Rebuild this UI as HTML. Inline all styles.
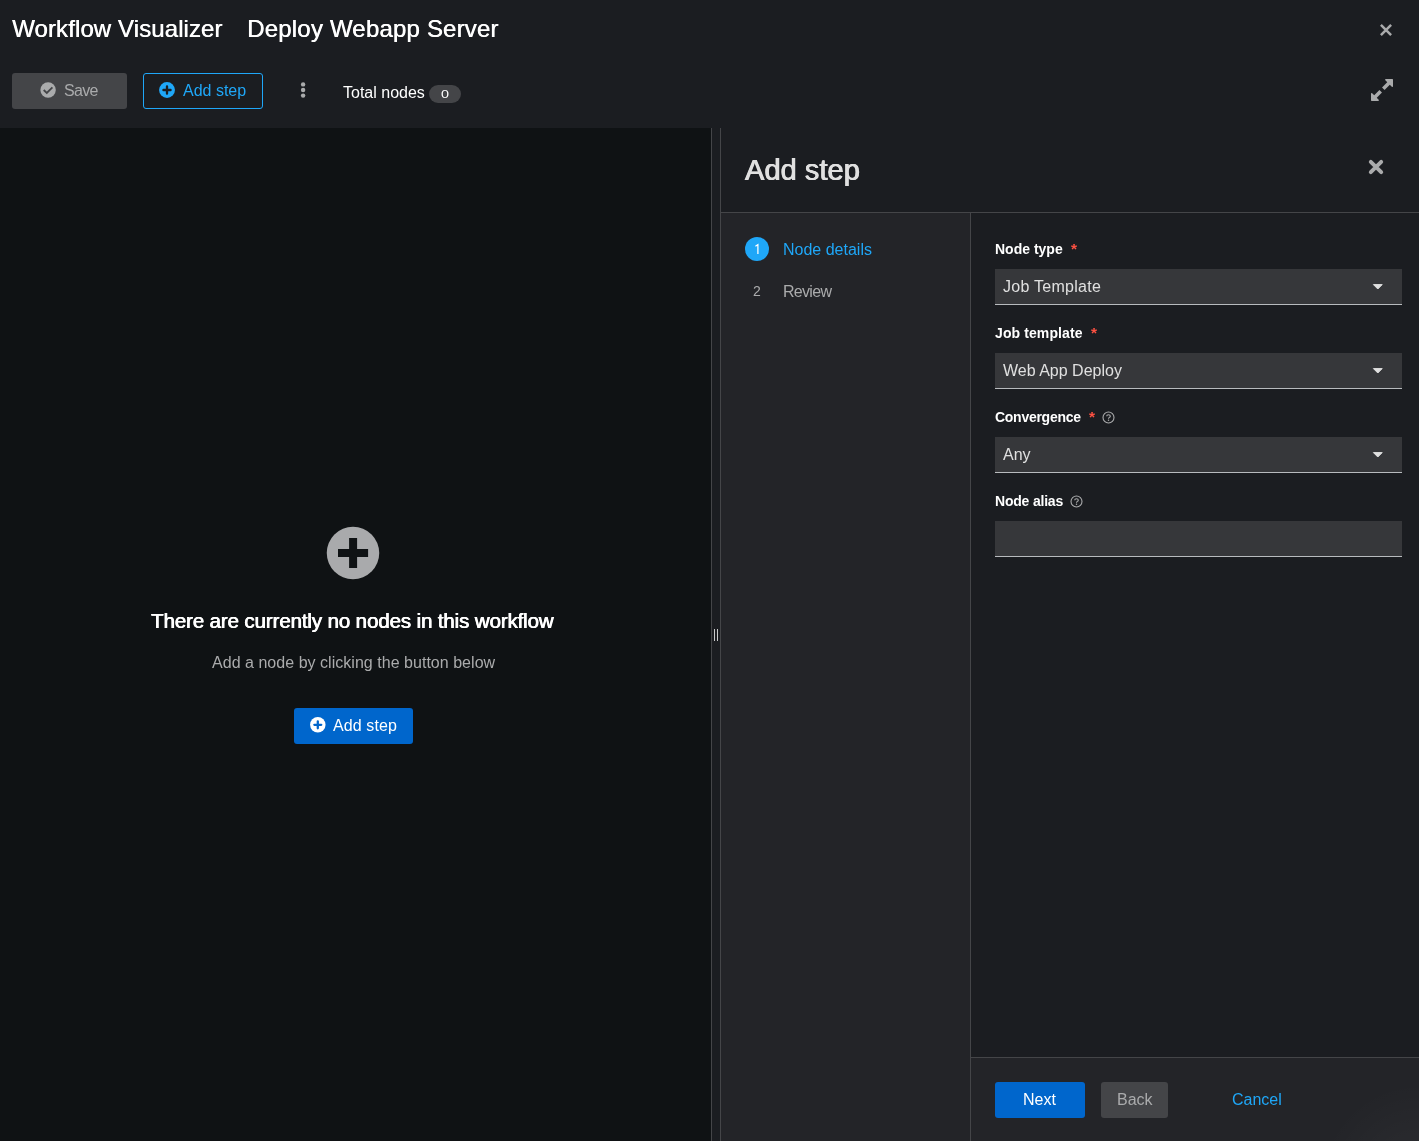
<!DOCTYPE html>
<html><head><meta charset="utf-8">
<style>
*{box-sizing:border-box;margin:0;padding:0}
html,body{width:1419px;height:1141px;overflow:hidden;background:#1b1d21;font-family:"Liberation Sans",sans-serif;color:#fff}
.abs{position:absolute}
.t{position:absolute;white-space:nowrap;line-height:1;will-change:transform}
#canvas{left:0;top:128px;width:711px;height:1013px;background:#0f1214}
#split{left:711px;top:128px;width:10px;height:1013px;background:#1b1d21;border-left:1px solid #444548;border-right:1px solid #444548}
#panel{left:721px;top:128px;width:698px;height:1013px;background:#232428}
#phead{left:721px;top:128px;width:698px;height:84px;background:#1b1d21}
#pline{left:721px;top:212px;width:698px;height:1px;background:#444548}
#nav{left:721px;top:213px;width:249px;height:928px;background:#232428}
#vline{left:970px;top:213px;width:1px;height:928px;background:#444548}
#body{left:971px;top:213px;width:448px;height:844px;background:#1b1d21}
#fline{left:971px;top:1057px;width:448px;height:1px;background:#444548}
#foot{left:971px;top:1058px;width:448px;height:83px;background:#232428 radial-gradient(circle at 100% 150%,rgba(255,255,255,0.03) 30px,rgba(255,255,255,0) 100px)}
.btn{position:absolute;border-radius:3px;height:36px;top:73px}
.sel{position:absolute;left:995px;width:407px;height:36px;background:#36373a;border-bottom:1px solid #b8bbbe}
.lbl{font-weight:bold;font-size:14px;color:#fff}
.req{color:#fe5142;font-size:15.5px;font-weight:bold}
.val{font-size:16px;color:#e0e0e0}
.caret{position:absolute;width:0;height:0;border-left:5px solid transparent;border-right:5px solid transparent;border-top:6px solid #e0e0e0}
</style></head><body>
<!-- header -->
<div class="t" style="left:12px;top:17px;font-size:24px;color:#fff;text-shadow:0.5px 0 0 #fff;letter-spacing:0.1px" id="t1">Workflow Visualizer</div>
<div class="t" style="left:247px;top:17px;font-size:24px;color:#fff;text-shadow:0.5px 0 0 #fff;letter-spacing:0.19px" id="t2">Deploy Webapp Server</div>
<svg class="abs" style="left:1380px;top:24px" width="12" height="12" viewBox="0 0 12 12"><path d="M0.9 0.9L11.1 11.1M11.1 0.9L0.9 11.1" stroke="#aaabac" stroke-width="2.5" /></svg>

<div class="btn" style="left:12px;width:115px;background:#444548"></div>
<svg class="abs" style="left:40px;top:82px" width="16" height="16" viewBox="0 0 16 16"><circle cx="8.1" cy="8" r="7.7" fill="#aaabac"/><path d="M3.7 8.0L6.8 11.0L12.4 5.3" stroke="#444548" stroke-width="1.8" fill="none"/></svg>
<div class="t" style="left:64px;top:83px;font-size:16px;color:#aaabac;letter-spacing:-0.7px" id="t3">Save</div>

<div class="btn" style="left:143px;width:120px;border:1px solid #1fa7f8"></div>
<svg class="abs" style="left:159px;top:81.9px" width="16" height="16" viewBox="0 0 14 14"><circle cx="7" cy="7" r="6.95" fill="#1fa7f8"/><path d="M7 3.9V10.1M3.9 7H10.1" stroke="#1b1d21" stroke-width="2.05" stroke-linecap="round"/></svg>
<div class="t" style="left:183px;top:83px;font-size:16px;color:#1fa7f8" id="t4">Add step</div>

<svg class="abs" style="left:300px;top:81px" width="6" height="18" viewBox="0 0 6 18"><circle cx="3.1" cy="3.4" r="2.2" fill="#aaabac"/><circle cx="3.1" cy="9" r="2.2" fill="#aaabac"/><circle cx="3.1" cy="14.6" r="2.2" fill="#aaabac"/></svg>

<div class="t" style="left:343px;top:85px;font-size:16px;color:#fff" id="t5">Total nodes</div>
<div class="abs" style="left:429px;top:85px;width:32px;height:18px;border-radius:9px;background:#444548"></div>
<div class="t" style="left:441.2px;top:89px;font-size:11.5px;color:#fff;transform:scaleX(1.25);transform-origin:0 0" id="t6">0</div>

<svg class="abs" style="left:1371px;top:79px" width="22" height="22" viewBox="0 0 22 22"><path d="M18 4L12.3 9.7M9.7 12.3L4 18" stroke="#aaabac" stroke-width="3.6"/><path d="M14.8 0.7H21.3V7.2Z" fill="#aaabac" stroke="#aaabac" stroke-width="1.4" stroke-linejoin="round"/><path d="M0.7 14.8V21.3H7.2Z" fill="#aaabac" stroke="#aaabac" stroke-width="1.4" stroke-linejoin="round"/></svg>

<!-- canvas -->
<div class="abs" id="canvas"></div>
<div class="abs" id="split"></div>
<div class="abs" style="left:714px;top:629px;width:1px;height:12px;background:#c9c9ca"></div>
<div class="abs" style="left:717px;top:629px;width:1px;height:12px;background:#c9c9ca"></div>

<svg class="abs" style="left:326px;top:526px" width="54" height="54" viewBox="0 0 54 54"><circle cx="27" cy="27" r="26.25" fill="#a9aaac"/><path d="M27.1 12V42.1M12 27.1H42.1" stroke="#0f1214" stroke-width="8"/></svg>
<div class="t" style="left:151.3px;top:610.5px;font-size:20.5px;color:#fff;text-shadow:0.5px 0 0 #fff,-0.25px 0 0 #fff;letter-spacing:-0.12px" id="t7">There are currently no nodes in this workflow</div>
<div class="t" style="left:211.5px;top:655px;font-size:16px;color:#aaabac;letter-spacing:0.03px" id="t8">Add a node by clicking the button below</div>
<div class="abs" style="left:294px;top:708px;width:119px;height:36px;border-radius:3px;background:#0066cc"></div>
<svg class="abs" style="left:310px;top:717.2px" width="15.6" height="15.6" viewBox="0 0 14 14"><circle cx="7" cy="7" r="6.95" fill="#fff"/><path d="M7 3.9V10.1M3.9 7H10.1" stroke="#0066cc" stroke-width="2.05" stroke-linecap="round"/></svg>
<div class="t" style="left:333.3px;top:717.5px;font-size:16px;color:#fff;letter-spacing:0.1px" id="t9">Add step</div>

<!-- panel -->
<div class="abs" id="panel"></div>
<div class="abs" id="phead"></div>
<div class="abs" id="pline"></div>
<div class="abs" id="nav"></div>
<div class="abs" id="vline"></div>
<div class="abs" id="body"></div>
<div class="abs" id="fline"></div>
<div class="abs" id="foot"></div>

<div class="t" style="left:745px;top:156.3px;font-size:29px;color:#e0e0e0;text-shadow:0.5px 0 0 #e0e0e0,-0.4px 0 0 #e0e0e0;letter-spacing:0.05px" id="t10">Add step</div>
<svg class="abs" style="left:1368px;top:159px" width="16" height="16" viewBox="0 0 16 16"><path d="M2.8 2.8L13.2 13.2M13.2 2.8L2.8 13.2" stroke="#aaabac" stroke-width="3.9" stroke-linecap="round"/></svg>

<div class="abs" style="left:745px;top:237px;width:24px;height:24px;border-radius:12px;background:#1fa7f8"></div>
<svg class="abs" style="left:752px;top:242px" width="10" height="14" viewBox="0 0 10 14"><path d="M3.4 4.2L5.9 2.6V12.1" stroke="#fff" stroke-width="1.25" fill="none" stroke-linejoin="miter"/></svg>
<div class="t" style="left:782.7px;top:241.5px;font-size:16px;color:#1fa7f8" id="t12">Node details</div>
<div class="t" style="left:753.3px;top:283.7px;font-size:14px;color:#aaabac" id="t13">2</div>
<div class="t" style="left:782.7px;top:283.5px;font-size:16px;color:#aaabac;letter-spacing:-0.7px" id="t14">Review</div>

<div class="t lbl" style="left:995px;top:242px" id="l1">Node type</div><div class="t req" style="left:1071.2px;top:241.3px">*</div>
<div class="sel" style="top:269px"></div><div class="t val" style="left:1003px;top:279px;letter-spacing:0.27px" id="v1">Job Template</div><svg class="abs" style="left:1372px;top:284px" width="12" height="7" viewBox="0 0 12 7"><path d="M1.4 0.6H10.2L5.8 5Z" fill="#e0e0e0" stroke="#e0e0e0" stroke-width="1" stroke-linejoin="round"/></svg>

<div class="t lbl" style="left:995px;top:326px;letter-spacing:0.1px" id="l2">Job template</div><div class="t req" style="left:1090.5px;top:325.3px">*</div>
<div class="sel" style="top:353px"></div><div class="t val" style="left:1003px;top:363px;letter-spacing:0px" id="v2">Web App Deploy</div><svg class="abs" style="left:1372px;top:368px" width="12" height="7" viewBox="0 0 12 7"><path d="M1.4 0.6H10.2L5.8 5Z" fill="#e0e0e0" stroke="#e0e0e0" stroke-width="1" stroke-linejoin="round"/></svg>

<div class="t lbl" style="left:995px;top:410px;letter-spacing:-0.27px" id="l3">Convergence</div><div class="t req" style="left:1088.8px;top:409.3px">*</div>
<svg class="abs" style="left:1102px;top:411.2px" width="13" height="13" viewBox="0 0 13 13"><circle cx="6.5" cy="6.5" r="5.5" fill="none" stroke="#aaabac" stroke-width="1.1"/><path d="M4.7 5.2C4.7 3.2 8.3 3.2 8.3 5.2C8.3 6.5 6.5 6.3 6.5 7.7" fill="none" stroke="#aaabac" stroke-width="1.1"/><circle cx="6.5" cy="9.3" r="0.75" fill="#aaabac"/></svg><div class="sel" style="top:437px"></div><div class="t val" style="left:1003px;top:447px" id="v3">Any</div><svg class="abs" style="left:1372px;top:452px" width="12" height="7" viewBox="0 0 12 7"><path d="M1.4 0.6H10.2L5.8 5Z" fill="#e0e0e0" stroke="#e0e0e0" stroke-width="1" stroke-linejoin="round"/></svg>

<div class="t lbl" style="left:995px;top:494px;letter-spacing:-0.2px" id="l4">Node alias</div>
<svg class="abs" style="left:1070.2px;top:495px" width="13" height="13" viewBox="0 0 13 13"><circle cx="6.5" cy="6.5" r="5.5" fill="none" stroke="#aaabac" stroke-width="1.1"/><path d="M4.7 5.2C4.7 3.2 8.3 3.2 8.3 5.2C8.3 6.5 6.5 6.3 6.5 7.7" fill="none" stroke="#aaabac" stroke-width="1.1"/><circle cx="6.5" cy="9.3" r="0.75" fill="#aaabac"/></svg><div class="sel" style="top:521px"></div>

<div class="abs" style="left:995px;top:1082px;width:90px;height:36px;border-radius:3px;background:#0066cc"></div>
<div class="t" style="left:1023px;top:1092px;font-size:16px;color:#fff" id="b1">Next</div>
<div class="abs" style="left:1101px;top:1082px;width:67px;height:36px;border-radius:3px;background:#444548"></div>
<div class="t" style="left:1117px;top:1092px;font-size:16px;color:#aaabac" id="b2">Back</div>
<div class="t" style="left:1232px;top:1092px;font-size:16px;color:#1fa7f8" id="b3">Cancel</div>
</body></html>
